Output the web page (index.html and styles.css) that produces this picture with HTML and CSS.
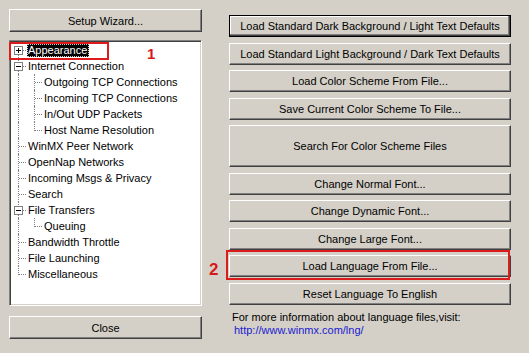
FILE: index.html
```html
<!DOCTYPE html>
<html lang="en">

<head>
  <meta charset="UTF-8">
  <title>Options</title>
  <link rel="stylesheet" href="styles.css">
</head>

<body>
  <div class="dlg">
    <div class="left">
      <button class="btn">Setup Wizard...</button>

      <div class="tree">
        <div class="row">
          <svg class="g" viewBox="0 0 16 16"><path class="dl" d="M7.5 13V16M12 8.5H16"/><rect x="3.5" y="4.5" width="8" height="8"/><path class="pm" d="M5 8.5h5M7.5 6v5"/></svg>
          <span class="label sel">Appearance</span>
        </div>
        <div class="row">
          <svg class="g" viewBox="0 0 16 16"><path class="dl" d="M7.5 0V4M7.5 13V16M12 8.5H16"/><rect x="3.5" y="4.5" width="8" height="8"/><path class="pm" d="M5 8.5h5"/></svg>
          <span class="label">Internet Connection</span>
        </div>
        <div class="row"><span class="g v"></span><span class="g t"></span><span class="label">Outgoing TCP Connections</span></div>
        <div class="row"><span class="g v"></span><span class="g t"></span><span class="label">Incoming TCP Connections</span></div>
        <div class="row"><span class="g v"></span><span class="g t"></span><span class="label">In/Out UDP Packets</span></div>
        <div class="row"><span class="g v"></span><span class="g l"></span><span class="label">Host Name Resolution</span></div>
        <div class="row"><span class="g t"></span><span class="label">WinMX Peer Network</span></div>
        <div class="row"><span class="g t"></span><span class="label">OpenNap Networks</span></div>
        <div class="row"><span class="g t"></span><span class="label">Incoming Msgs &amp; Privacy</span></div>
        <div class="row"><span class="g t"></span><span class="label">Search</span></div>
        <div class="row">
          <svg class="g" viewBox="0 0 16 16"><path class="dl" d="M7.5 0V4M7.5 13V16M12 8.5H16"/><rect x="3.5" y="4.5" width="8" height="8"/><path class="pm" d="M5 8.5h5"/></svg>
          <span class="label">File Transfers</span>
        </div>
        <div class="row"><span class="g v"></span><span class="g l"></span><span class="label">Queuing</span></div>
        <div class="row"><span class="g t"></span><span class="label">Bandwidth Throttle</span></div>
        <div class="row"><span class="g t"></span><span class="label">File Launching</span></div>
        <div class="row"><span class="g l"></span><span class="label">Miscellaneous</span></div>
      </div>

      <button class="btn">Close</button>
    </div>

    <div class="right">
      <button class="btn default">Load Standard Dark Background / Light Text Defaults</button>
      <button class="btn">Load Standard Light Background / Dark Text Defaults</button>
      <button class="btn">Load Color Scheme From File...</button>
      <button class="btn">Save Current Color Scheme To File...</button>
      <button class="btn tall">Search For Color Scheme Files</button>
      <button class="btn">Change Normal Font...</button>
      <button class="btn">Change Dynamic Font...</button>
      <button class="btn">Change Large Font...</button>
      <button class="btn">Load Language From File...</button>
      <button class="btn">Reset Language To English</button>
      <p class="info">For more information about language files,visit:<br><a href="#" class="link">http://www.winmx.com/lng/</a></p>
    </div>

    <!-- red annotations drawn over the dialog -->
    <div class="mark mark-1"></div>
    <span class="num num-1">1</span>
    <div class="mark mark-2"></div>
    <span class="num num-2">2</span>
  </div>
</body>

</html>
```

FILE: styles.css
```css
/* Basic Reset */
* {
  margin: 0;
  padding: 0;
  box-sizing: border-box;
}

body {
  font-family: 'Liberation Sans', Arial, sans-serif;
  font-size: 11px;
  color: #000;
  background-color: #d4d0c8;
}

/* Dialog layout */
.dlg {
  position: relative;
  display: flex;
  gap: 27px;
  width: 529px;
  height: 353px;
  padding: 9px 0 0 9px;
}

.left {
  width: 193px;
  display: flex;
  flex-direction: column;
  gap: 8px;
}

.right {
  width: 282px;
  margin-top: 6px;
  display: flex;
  flex-direction: column;
  gap: 5.5px;
}

/* Classic 3D buttons */
.btn {
  display: block;
  width: 100%;
  height: 22px;
  font-family: 'Liberation Sans', Arial, sans-serif;
  font-size: 11px;
  color: #000;
  background-color: #d4d0c8;
  border: 1px solid;
  border-color: #fff #404040 #404040 #fff;
  box-shadow: inset -1px -1px #808080;
  text-align: center;
}

.left .btn {
  height: 23px;
}

.btn.default {
  border-color: #000;
  box-shadow: inset -1px -1px #404040, inset -2px -2px #808080, inset 1px 1px #fff;
}

.btn.tall {
  height: 42px;
}

/* Tree view */
.tree {
  height: 266px;
  background-color: #fff;
  border: 1px solid;
  border-color: #808080 #fff #fff #808080;
  box-shadow: inset 1px 1px #404040, inset -1px -1px #d4d0c8;
  padding: 1px 0 0 1px;
  margin-bottom: 2px;
}

.row {
  display: flex;
  align-items: center;
  height: 16px;
}

.g {
  flex: none;
  position: relative;
  width: 16px;
  height: 16px;
}

.g.v::before,
.g.t::before,
.g.l::before {
  content: "";
  position: absolute;
  left: 7px;
  top: 0;
  height: 16px;
  border-left: 1px dotted #808080;
}

.g.l::before {
  height: 9px;
}

.g.t::after,
.g.l::after {
  content: "";
  position: absolute;
  left: 8px;
  top: 8px;
  width: 7px;
  border-top: 1px dotted #808080;
}

svg.g rect {
  fill: #fff;
  stroke: #808080;
  stroke-width: 1;
  shape-rendering: crispEdges;
}

svg.g .dl {
  fill: none;
  stroke: #808080;
  stroke-dasharray: 1 1;
  shape-rendering: crispEdges;
}

svg.g .pm {
  fill: none;
  stroke: #000;
  shape-rendering: crispEdges;
}

.label {
  height: 13px;
  line-height: 13px;
  padding: 0 1px;
  white-space: nowrap;
}

.label.sel {
  padding: 0 2px 0 1px;
  background-color: #000;
  color: #fff;
  outline: 1px dotted #d4d0c8;
  outline-offset: -1px;
}

/* Info text */
.info {
  margin: 1px 0 0 3px;
  line-height: 13px;
}

.link {
  margin-left: 2px;
  color: #1a1ad0;
  text-decoration: none;
}

/* Red annotations */
.mark {
  position: absolute;
  border: 2px solid #dc1c1c;
}

.mark-1 {
  left: 9px;
  top: 42px;
  width: 100px;
  height: 18px;
}

.mark-2 {
  left: 226px;
  top: 250px;
  width: 284px;
  height: 30px;
}

.num {
  position: absolute;
  color: #d81818;
  font-weight: bold;
}

.num-1 {
  left: 147px;
  top: 46px;
  font-size: 15px;
  line-height: 15px;
}

.num-2 {
  left: 209px;
  top: 261px;
  font-size: 17px;
  line-height: 17px;
}
```
